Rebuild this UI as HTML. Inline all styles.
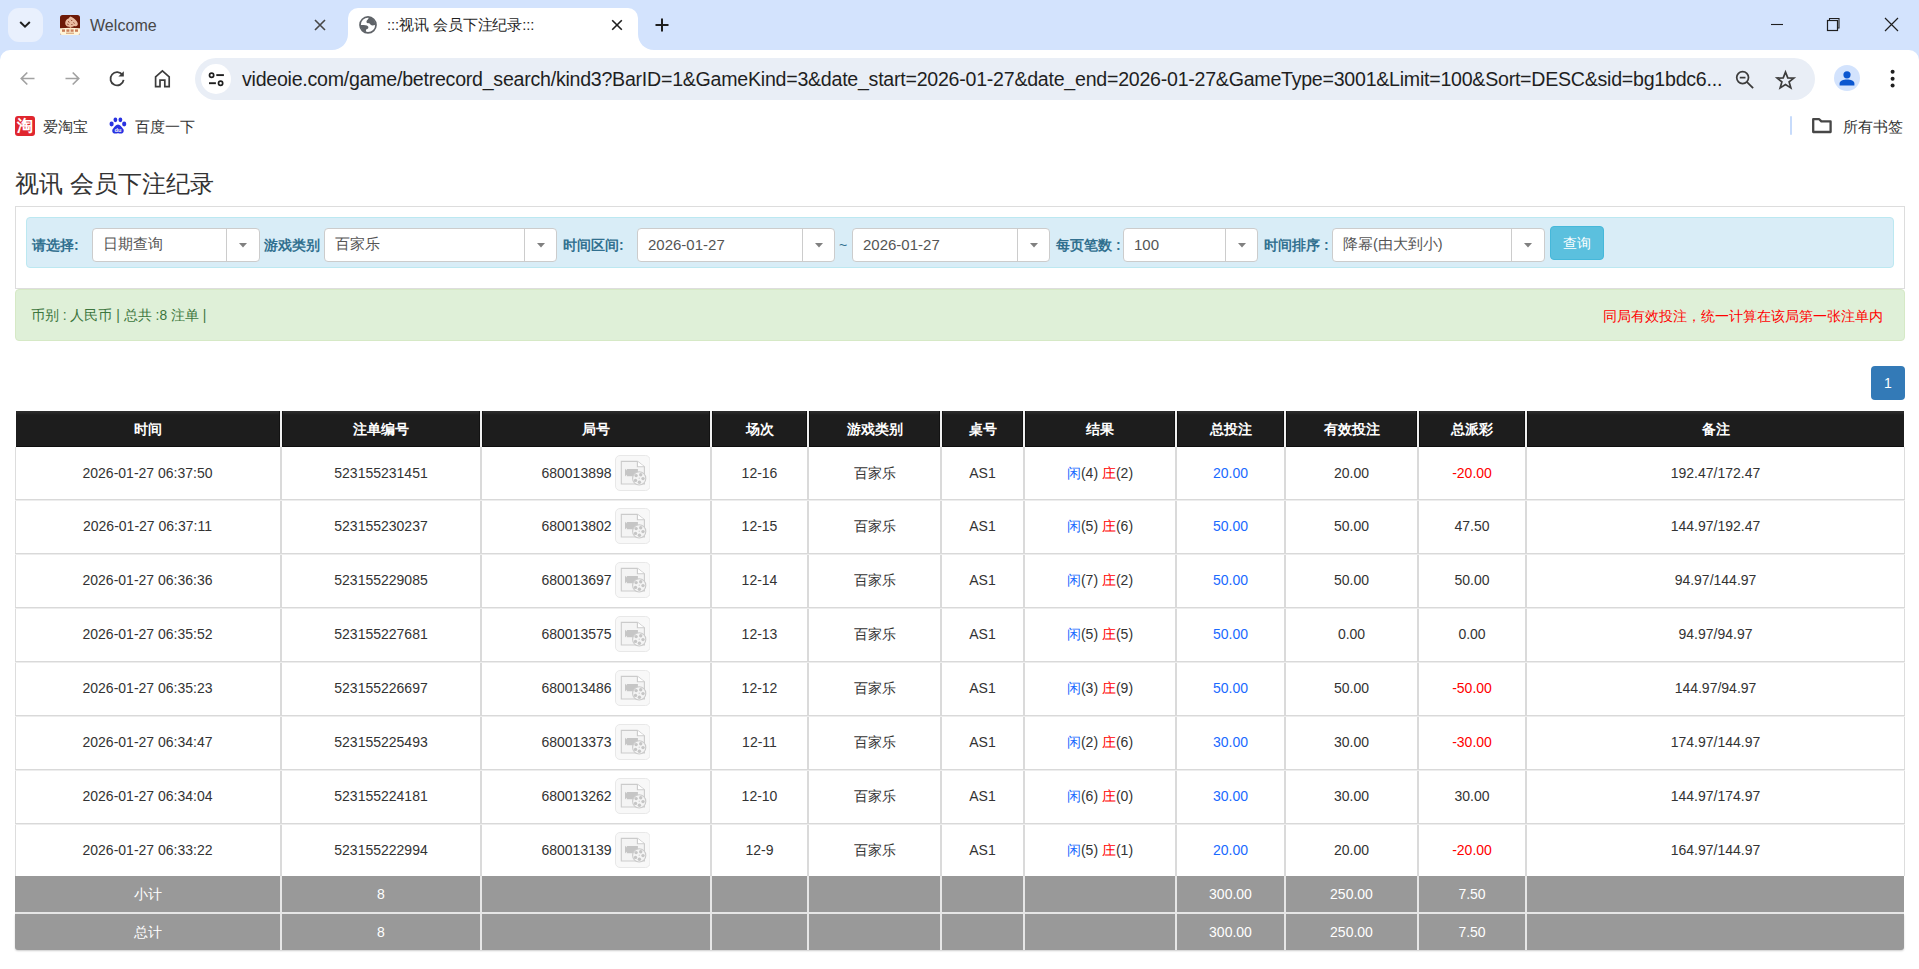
<!DOCTYPE html><html><head><meta charset="utf-8"><title>视讯 会员下注纪录</title><style>
*{box-sizing:border-box;margin:0;padding:0}
html,body{width:1919px;height:969px;overflow:hidden;background:#fff;font-family:"Liberation Sans",sans-serif;position:relative}
.a{position:absolute}
.t{position:absolute;white-space:nowrap;line-height:1}
.ic{position:absolute;overflow:visible}
</style></head><body>
<div class="a" style="left:0;top:0;width:1919px;height:62px;background:#d3e3fd"></div>
<div class="a" style="left:8px;top:8px;width:35px;height:34px;border-radius:11px;background:#e9f0fd"></div>
<svg class="ic" style="left:17px;top:16px" width="16" height="16" viewBox="0 0 16 16"><path d="M3.2 6 L8 10.6 L12.8 6" fill="none" stroke="#1f1f1f" stroke-width="2"/></svg>
<svg class="ic" style="left:60px;top:15px" width="20" height="20" viewBox="0 0 20 20"><rect x="0" y="0" width="20" height="20" rx="2.6" fill="#6d1a08"/><path d="M0 13.2 Q10 12.2 20 13.2 V17.4 Q20 20 17.4 20 H2.6 Q0 20 0 17.4Z" fill="#fff4d8"/><rect x="2" y="14.4" width="3" height="2.4" fill="#b5562f" opacity="0.75"/><rect x="6.4" y="14.4" width="3" height="2.4" fill="#b5562f" opacity="0.75"/><rect x="10.6" y="14.4" width="3" height="2.4" fill="#b5562f" opacity="0.75"/><rect x="15" y="14.4" width="3" height="2.4" fill="#b5562f" opacity="0.75"/><rect x="6" y="17.6" width="8" height="1.3" fill="#c98a5a" opacity="0.7"/><path d="M10.4 1.6 C13.6 3 17.4 5.6 17.8 8.8 C18 10.8 16.2 11.6 14.4 11 C12.6 12 10.8 12.2 9 11.8 C7 11.6 5 10.4 5.2 8 C5.4 5.6 6.8 3.8 8.6 3.6 C9.2 2.6 9.8 1.9 10.4 1.6Z" fill="#e9bba0"/><path d="M8 6.4 L9.4 7.4 M11 4.8 L12.2 6 M13.6 7.4 L14.4 8.6 M7.2 9 L8.6 9.6 M11.4 9 L12.4 10" stroke="#8a3a22" stroke-width="1"/><path d="M10.6 11.4 L11.6 13.2 L9.6 13.2Z" fill="#e7a97a"/></svg>
<div class="t" style="left:90px;top:18px;font-size:16px;color:#474747;letter-spacing:0.05px">Welcome</div>
<svg class="ic" style="left:314px;top:19px" width="12" height="12" viewBox="0 0 12 12"><path d="M1 1 L11 11 M11 1 L1 11" stroke="#474747" stroke-width="1.6"/></svg>
<div class="a" style="left:348px;top:8px;width:290px;height:42px;background:#fff;border-radius:10px 10px 0 0"></div>
<svg class="ic" style="left:332px;top:34px" width="16" height="16" viewBox="0 0 16 16"><path d="M16 0 L16 16 L0 16 C9 16 16 9 16 0Z" fill="#fff"/></svg>
<svg class="ic" style="left:638px;top:34px" width="16" height="16" viewBox="0 0 16 16"><path d="M0 0 L0 16 L16 16 C7 16 0 9 0 0Z" fill="#fff"/></svg>
<svg class="ic" style="left:356px;top:14px" width="24" height="22" viewBox="0 0 24 22"><circle cx="12" cy="10.9" r="8.0" fill="#fff" stroke="#5f6368" stroke-width="1.7"/><path d="M13 3 C12.6 4.6 12 5.4 11.3 5.9 C10.6 6.6 10.3 7.4 10.6 8.6 C11 9.4 12.6 9.2 13.6 9.5 C14.4 9.9 14.5 10.9 15.6 11.3 C16.8 11.6 18.2 11 19.2 10.9 C19.4 6.8 16.6 3.6 13 3Z" fill="#5f6368"/><path d="M4.4 11 C6.6 11 9 11.1 10.8 11.6 C12 12 12.6 12.8 12.3 14 C12 15 10.8 14.9 10.2 15.6 C9.8 16.2 9.9 17.2 10.3 18.2 C7 17.6 4.6 14.8 4.4 11Z" fill="#5f6368"/></svg>
<div class="t" style="left:387px;top:18px;font-size:14.8px;color:#1f1f1f;letter-spacing:-0.1px">:::视讯 会员下注纪录:::</div>
<svg class="ic" style="left:611px;top:19px" width="12" height="12" viewBox="0 0 12 12"><path d="M1.2 1.2 L10.8 10.8 M10.8 1.2 L1.2 10.8" stroke="#1f1f1f" stroke-width="1.6"/></svg>
<svg class="ic" style="left:655px;top:18px" width="14" height="14" viewBox="0 0 14 14"><path d="M7 0.5 V13.5 M0.5 7 H13.5" stroke="#1f1f1f" stroke-width="2"/></svg>
<svg class="ic" style="left:1770px;top:17px" width="14" height="14" viewBox="0 0 14 14"><path d="M1 7.5 H13" stroke="#1f1f1f" stroke-width="1.1"/></svg>
<svg class="ic" style="left:1826px;top:17px" width="14" height="14" viewBox="0 0 14 14"><rect x="1.5" y="3.5" width="10" height="10" fill="none" stroke="#1f1f1f" stroke-width="1.2"/><path d="M3.5 3.5 V1.5 H13 V11 H11.5" fill="none" stroke="#1f1f1f" stroke-width="1.1"/></svg>
<svg class="ic" style="left:1884px;top:17px" width="15" height="15" viewBox="0 0 15 15"><path d="M1 1 L14 14 M14 1 L1 14" stroke="#1f1f1f" stroke-width="1.2"/></svg>
<div class="a" style="left:0;top:50px;width:1919px;height:100px;background:#fff;border-radius:10px 10px 0 0"></div>
<svg class="ic" style="left:19px;top:70px" width="17" height="17" viewBox="0 0 17 17"><path d="M15.5 8.5 H2.5 M8.3 2.5 L2.3 8.5 L8.3 14.5" fill="none" stroke="#a2a2a2" stroke-width="1.7"/></svg>
<svg class="ic" style="left:64px;top:70px" width="17" height="17" viewBox="0 0 17 17"><path d="M1.5 8.5 H14.5 M8.7 2.5 L14.7 8.5 L8.7 14.5" fill="none" stroke="#a2a2a2" stroke-width="1.7"/></svg>
<svg class="ic" style="left:108px;top:69px" width="19" height="19" viewBox="0 0 19 19"><path d="M14.6 6.2 A6.6 6.6 0 1 0 15.6 10.8" fill="none" stroke="#3c3c3c" stroke-width="1.8"/><path d="M15.8 2.2 V7.6 H10.4 Z" fill="#3c3c3c"/></svg>
<svg class="ic" style="left:153px;top:69px" width="19" height="19" viewBox="0 0 19 19"><path d="M2.6 17.6 V7.8 L9.4 1.8 L16.2 7.8 V17.6 H11.8 V11.2 H7 V17.6 Z" fill="none" stroke="#3c3c3c" stroke-width="1.7" stroke-linejoin="miter"/></svg>
<div class="a" style="left:195px;top:58px;width:1620px;height:42px;border-radius:21px;background:#e9eef6"></div>
<div class="a" style="left:201px;top:64px;width:30px;height:30px;border-radius:15px;background:#fff"></div>
<svg class="ic" style="left:205px;top:70px" width="22" height="18" viewBox="0 0 22 18"><circle cx="6.6" cy="5.3" r="2.1" fill="none" stroke="#1f1f1f" stroke-width="1.7"/><path d="M11.3 5.1 H18.9" stroke="#1f1f1f" stroke-width="1.9"/><circle cx="15.6" cy="13.2" r="2.1" fill="none" stroke="#1f1f1f" stroke-width="1.7"/><path d="M4 13.2 H10.9" stroke="#1f1f1f" stroke-width="1.9"/></svg>
<div class="t" id="url" style="left:242px;top:70px;font-size:19.6px;letter-spacing:-0.25px;color:#1f1f1f">videoie.com/game/betrecord_search/kind3?BarID=1&amp;GameKind=3&amp;date_start=2026-01-27&amp;date_end=2026-01-27&amp;GameType=3001&amp;Limit=100&amp;Sort=DESC&amp;sid=bg1bdc6...</div>
<svg class="ic" style="left:1735px;top:70px" width="20" height="20" viewBox="0 0 21 21"><circle cx="8" cy="8" r="6.2" fill="none" stroke="#3c3c3c" stroke-width="1.8"/><path d="M5 8 H11" stroke="#3c3c3c" stroke-width="1.8"/><path d="M12.4 12.4 L19 19" stroke="#3c3c3c" stroke-width="1.9"/></svg>
<svg class="ic" style="left:1775px;top:69.5px" width="21" height="20" viewBox="0 0 22 21"><path d="M11 2.2 L13.4 8.2 L19.8 8.5 L14.8 12.5 L16.6 18.8 L11 15.2 L5.4 18.8 L7.2 12.5 L2.2 8.5 L8.6 8.2 Z" fill="none" stroke="#3c3c3c" stroke-width="1.8" stroke-linejoin="miter"/></svg>
<div class="a" style="left:1834px;top:65px;width:26px;height:26px;border-radius:13px;background:#d3e3fd"></div>
<svg class="ic" style="left:1834px;top:65px" width="26" height="26" viewBox="0 0 26 26"><circle cx="13" cy="9.8" r="3.6" fill="#0b57d0"/><path d="M5.6 20.4 V18.6 C5.6 16 9.4 14.6 13 14.6 C16.6 14.6 20.4 16 20.4 18.6 V20.4 Z" fill="#0b57d0"/></svg>
<svg class="ic" style="left:1888px;top:67px" width="10" height="24" viewBox="0 0 10 24"><circle cx="4.6" cy="4.8" r="2" fill="#1f1f1f"/><circle cx="4.6" cy="11.7" r="2" fill="#1f1f1f"/><circle cx="4.6" cy="18.5" r="2" fill="#1f1f1f"/></svg>
<div class="a" style="left:15px;top:116px;width:20px;height:20px;border-radius:3px;background:#e0262e"></div>
<div class="t" style="left:17px;top:118px;font-size:16px;color:#fff;font-weight:bold">淘</div>
<div class="t" style="left:43px;top:120px;font-size:14.6px;color:#333">爱淘宝</div>
<svg class="ic" style="left:109px;top:117px" width="18" height="18" viewBox="0 0 18 18"><ellipse cx="2.6" cy="7" rx="2.1" ry="2.4" fill="#2932e1"/><ellipse cx="6.4" cy="2.8" rx="1.9" ry="2.4" fill="#2932e1"/><ellipse cx="11.4" cy="2.8" rx="1.9" ry="2.4" fill="#2932e1"/><ellipse cx="15.2" cy="7" rx="2.1" ry="2.4" fill="#2932e1"/><path d="M9 7.6 C6.6 7.6 5.6 10.2 4 11.8 C2.6 13.2 3.2 16.6 6 16.6 C7.4 16.6 8 16.2 9 16.2 C10 16.2 10.6 16.6 12 16.6 C14.8 16.6 15.4 13.2 14 11.8 C12.4 10.2 11.4 7.6 9 7.6Z" fill="#2932e1"/><text x="9" y="15.4" font-size="5.6" font-family="Liberation Sans" fill="#fff" text-anchor="middle" font-weight="bold">du</text></svg>
<div class="t" style="left:135px;top:120px;font-size:14.6px;color:#333">百度一下</div>
<div class="a" style="left:1790px;top:116px;width:2px;height:19px;background:#c7dbfb;border-radius:1px"></div>
<svg class="ic" style="left:1811px;top:117px" width="22" height="17" viewBox="0 0 22 17"><path d="M2.2 2.2 H8.2 L10.4 4.4 H19.6 V15 H2.2 Z" fill="none" stroke="#474747" stroke-width="2.3" stroke-linejoin="round"/></svg>
<div class="t" style="left:1843px;top:120px;font-size:14.6px;color:#333">所有书签</div>
<div class="t" style="left:15px;top:172px;font-size:24px;color:#333">视讯 会员下注纪录</div>
<div class="a" style="left:15px;top:206px;width:1890px;height:83px;border:1px solid #ddd;border-bottom-color:#ddd"></div>
<div class="a" style="left:26px;top:217px;width:1868px;height:51px;border:1px solid #bce8f1;background:#d9edf7;border-radius:4px"></div>
<div class="t" style="left:32px;top:238px;font-size:14px;font-weight:bold;color:#31708f">请选择:</div>
<div class="a" style="left:92px;top:228px;width:168px;height:34px;border:1px solid #ccc;border-radius:4px;background:#fff"></div>
<div class="a" style="left:226px;top:229px;width:1px;height:32px;background:#ccc"></div>
<svg class="ic" style="left:239px;top:243px" width="8" height="5" viewBox="0 0 8 5"><path d="M0 0 H8 L4 4.5Z" fill="#808080"/></svg>
<div class="t" style="left:103px;top:237px;font-size:14.5px;color:#555">日期查询</div>
<div class="t" style="left:264px;top:238px;font-size:14px;font-weight:bold;color:#31708f">游戏类别</div>
<div class="a" style="left:324px;top:228px;width:233px;height:34px;border:1px solid #ccc;border-radius:4px;background:#fff"></div>
<div class="a" style="left:524px;top:229px;width:1px;height:32px;background:#ccc"></div>
<svg class="ic" style="left:537px;top:243px" width="8" height="5" viewBox="0 0 8 5"><path d="M0 0 H8 L4 4.5Z" fill="#808080"/></svg>
<div class="t" style="left:335px;top:237px;font-size:14.5px;color:#555">百家乐</div>
<div class="t" style="left:563px;top:238px;font-size:14px;font-weight:bold;color:#31708f">时间区间:</div>
<div class="a" style="left:637px;top:228px;width:198px;height:34px;border:1px solid #ccc;border-radius:4px;background:#fff"></div>
<div class="a" style="left:802px;top:229px;width:1px;height:32px;background:#ccc"></div>
<svg class="ic" style="left:815px;top:243px" width="8" height="5" viewBox="0 0 8 5"><path d="M0 0 H8 L4 4.5Z" fill="#808080"/></svg>
<div class="t" style="left:648px;top:237px;font-size:15px;color:#555">2026-01-27</div>
<div class="t" style="left:839px;top:238px;font-size:14px;color:#31708f">~</div>
<div class="a" style="left:852px;top:228px;width:198px;height:34px;border:1px solid #ccc;border-radius:4px;background:#fff"></div>
<div class="a" style="left:1017px;top:229px;width:1px;height:32px;background:#ccc"></div>
<svg class="ic" style="left:1030px;top:243px" width="8" height="5" viewBox="0 0 8 5"><path d="M0 0 H8 L4 4.5Z" fill="#808080"/></svg>
<div class="t" style="left:863px;top:237px;font-size:15px;color:#555">2026-01-27</div>
<div class="t" style="left:1056px;top:238px;font-size:14px;font-weight:bold;color:#31708f">每页笔数 :</div>
<div class="a" style="left:1123px;top:228px;width:135px;height:34px;border:1px solid #ccc;border-radius:4px;background:#fff"></div>
<div class="a" style="left:1225px;top:229px;width:1px;height:32px;background:#ccc"></div>
<svg class="ic" style="left:1238px;top:243px" width="8" height="5" viewBox="0 0 8 5"><path d="M0 0 H8 L4 4.5Z" fill="#808080"/></svg>
<div class="t" style="left:1134px;top:237px;font-size:15px;color:#555">100</div>
<div class="t" style="left:1264px;top:238px;font-size:14px;font-weight:bold;color:#31708f">时间排序 :</div>
<div class="a" style="left:1332px;top:228px;width:213px;height:34px;border:1px solid #ccc;border-radius:4px;background:#fff"></div>
<div class="a" style="left:1511px;top:229px;width:1px;height:32px;background:#ccc"></div>
<svg class="ic" style="left:1524px;top:243px" width="8" height="5" viewBox="0 0 8 5"><path d="M0 0 H8 L4 4.5Z" fill="#808080"/></svg>
<div class="t" style="left:1343px;top:237px;font-size:14.5px;color:#555">降幂(由大到小)</div>
<div class="a" style="left:1550px;top:226px;width:54px;height:34px;border-radius:4px;background:#5bc0de;border:1px solid #46b8da"></div>
<div class="t" style="left:1563px;top:236px;font-size:14px;color:#fff">查询</div>
<div class="a" style="left:15px;top:289px;width:1890px;height:52px;border:1px solid #d6e9c6;background:#dff0d8;border-radius:4px"></div>
<div class="t" style="left:31px;top:309px;font-size:13.8px;color:#3c763d">币别 : 人民币 | 总共 :8 注单 |</div>
<div class="t" style="left:1603px;top:309px;font-size:14px;color:#f00">同局有效投注，统一计算在该局第一张注单内</div>
<div class="a" style="left:1871px;top:366px;width:34px;height:34px;border-radius:4px;background:#337ab7"></div>
<div class="t" style="left:1884px;top:376px;font-size:14px;color:#fff">1</div>
<div class="a" style="left:16px;top:411px;width:1888px;height:36px;background:linear-gradient(#2a2a2a 0px,#2c2c2c 1px,#242424 2.5px,#1d1d1d 4px,#1d1d1d 35px,#0e0e0e 35px)"></div>
<div class="a" style="left:279px;top:411px;width:4px;height:36px;background:#121212"></div>
<div class="a" style="left:280px;top:411px;width:2px;height:36px;background:#f0f0f0"></div>
<div class="a" style="left:479px;top:411px;width:4px;height:36px;background:#121212"></div>
<div class="a" style="left:480px;top:411px;width:2px;height:36px;background:#f0f0f0"></div>
<div class="a" style="left:709px;top:411px;width:4px;height:36px;background:#121212"></div>
<div class="a" style="left:710px;top:411px;width:2px;height:36px;background:#f0f0f0"></div>
<div class="a" style="left:806px;top:411px;width:4px;height:36px;background:#121212"></div>
<div class="a" style="left:807px;top:411px;width:2px;height:36px;background:#f0f0f0"></div>
<div class="a" style="left:939px;top:411px;width:4px;height:36px;background:#121212"></div>
<div class="a" style="left:940px;top:411px;width:2px;height:36px;background:#f0f0f0"></div>
<div class="a" style="left:1022px;top:411px;width:4px;height:36px;background:#121212"></div>
<div class="a" style="left:1023px;top:411px;width:2px;height:36px;background:#f0f0f0"></div>
<div class="a" style="left:1174px;top:411px;width:4px;height:36px;background:#121212"></div>
<div class="a" style="left:1175px;top:411px;width:2px;height:36px;background:#f0f0f0"></div>
<div class="a" style="left:1283px;top:411px;width:4px;height:36px;background:#121212"></div>
<div class="a" style="left:1284px;top:411px;width:2px;height:36px;background:#f0f0f0"></div>
<div class="a" style="left:1416px;top:411px;width:4px;height:36px;background:#121212"></div>
<div class="a" style="left:1417px;top:411px;width:2px;height:36px;background:#f0f0f0"></div>
<div class="a" style="left:1524px;top:411px;width:4px;height:36px;background:#121212"></div>
<div class="a" style="left:1525px;top:411px;width:2px;height:36px;background:#f0f0f0"></div>
<div class="t" style="left:15px;top:422px;width:265px;text-align:center;font-size:14px;font-weight:bold;color:#fff">时间</div>
<div class="t" style="left:282px;top:422px;width:198px;text-align:center;font-size:14px;font-weight:bold;color:#fff">注单编号</div>
<div class="t" style="left:482px;top:422px;width:228px;text-align:center;font-size:14px;font-weight:bold;color:#fff">局号</div>
<div class="t" style="left:712px;top:422px;width:95px;text-align:center;font-size:14px;font-weight:bold;color:#fff">场次</div>
<div class="t" style="left:809px;top:422px;width:131px;text-align:center;font-size:14px;font-weight:bold;color:#fff">游戏类别</div>
<div class="t" style="left:942px;top:422px;width:81px;text-align:center;font-size:14px;font-weight:bold;color:#fff">桌号</div>
<div class="t" style="left:1025px;top:422px;width:150px;text-align:center;font-size:14px;font-weight:bold;color:#fff">结果</div>
<div class="t" style="left:1177px;top:422px;width:107px;text-align:center;font-size:14px;font-weight:bold;color:#fff">总投注</div>
<div class="t" style="left:1286px;top:422px;width:131px;text-align:center;font-size:14px;font-weight:bold;color:#fff">有效投注</div>
<div class="t" style="left:1419px;top:422px;width:106px;text-align:center;font-size:14px;font-weight:bold;color:#fff">总派彩</div>
<div class="t" style="left:1527px;top:422px;width:377px;text-align:center;font-size:14px;font-weight:bold;color:#fff">备注</div>
<div class="a" style="left:15px;top:447px;width:1890px;height:429px;border-left:1px solid #ddd;border-right:1px solid #ddd"></div>
<div class="a" style="left:280px;top:447px;width:2px;height:429px;background:#dadada"></div>
<div class="a" style="left:480px;top:447px;width:2px;height:429px;background:#dadada"></div>
<div class="a" style="left:710px;top:447px;width:2px;height:429px;background:#dadada"></div>
<div class="a" style="left:807px;top:447px;width:2px;height:429px;background:#dadada"></div>
<div class="a" style="left:940px;top:447px;width:2px;height:429px;background:#dadada"></div>
<div class="a" style="left:1023px;top:447px;width:2px;height:429px;background:#dadada"></div>
<div class="a" style="left:1175px;top:447px;width:2px;height:429px;background:#dadada"></div>
<div class="a" style="left:1284px;top:447px;width:2px;height:429px;background:#dadada"></div>
<div class="a" style="left:1417px;top:447px;width:2px;height:429px;background:#dadada"></div>
<div class="a" style="left:1525px;top:447px;width:2px;height:429px;background:#dadada"></div>
<div class="a" style="left:15px;top:499px;width:1890px;height:1px;background:#d9d9d9"></div>
<div class="a" style="left:15px;top:500px;width:1890px;height:1px;background:#ededed"></div>
<div class="a" style="left:15px;top:553px;width:1890px;height:1px;background:#d9d9d9"></div>
<div class="a" style="left:15px;top:554px;width:1890px;height:1px;background:#ededed"></div>
<div class="a" style="left:15px;top:607px;width:1890px;height:1px;background:#d9d9d9"></div>
<div class="a" style="left:15px;top:608px;width:1890px;height:1px;background:#ededed"></div>
<div class="a" style="left:15px;top:661px;width:1890px;height:1px;background:#d9d9d9"></div>
<div class="a" style="left:15px;top:662px;width:1890px;height:1px;background:#ededed"></div>
<div class="a" style="left:15px;top:715px;width:1890px;height:1px;background:#d9d9d9"></div>
<div class="a" style="left:15px;top:716px;width:1890px;height:1px;background:#ededed"></div>
<div class="a" style="left:15px;top:769px;width:1890px;height:1px;background:#d9d9d9"></div>
<div class="a" style="left:15px;top:770px;width:1890px;height:1px;background:#ededed"></div>
<div class="a" style="left:15px;top:823px;width:1890px;height:1px;background:#d9d9d9"></div>
<div class="a" style="left:15px;top:824px;width:1890px;height:1px;background:#ededed"></div>
<div class="t" style="left:15px;top:466px;width:265px;text-align:center;font-size:14px;color:#333;">2026-01-27 06:37:50</div>
<div class="t" style="left:282px;top:466px;width:198px;text-align:center;font-size:14px;color:#333;">523155231451</div>
<div class="t" style="left:482px;top:466px;width:228px;text-align:center;font-size:14px;color:#333">680013898<span style="display:inline-block;width:39px"></span></div>
<div class="a" style="left:615px;top:455px;width:36px;height:36px"><svg width="35" height="36" viewBox="0 0 35 36" style="position:absolute;left:0;top:0"><rect x="0.5" y="0.5" width="34.5" height="35" rx="4.5" fill="#f8f8f8" stroke="#e8e8e8"/><path d="M6.3 6.4 H22.4 L29.4 11.8 V29 H6.3 Z" fill="#f4f4f4" stroke="#cbcbcb" stroke-width="1.1"/><path d="M22.4 6.4 V11.8 H29.4" fill="#fff" stroke="#cbcbcb" stroke-width="1.1"/><path d="M10 13.8 L11.8 15.6 V19.6 L10 21.4 Z M11.8 14 H22.9 V21.3 H11.8Z" fill="#c6c6c6"/><circle cx="24.2" cy="23.4" r="6.6" fill="#f4f4f4" stroke="#cbcbcb" stroke-width="1.1"/><circle cx="21.1" cy="20.6" r="1.7" fill="#c6c6c6"/><circle cx="25.7" cy="19.8" r="1.7" fill="#c6c6c6"/><circle cx="28" cy="23.6" r="1.7" fill="#c6c6c6"/><circle cx="24.4" cy="27.2" r="1.7" fill="#c6c6c6"/><circle cx="20.5" cy="25.4" r="1.7" fill="#c6c6c6"/><circle cx="24.2" cy="23.2" r="0.6" fill="#c6c6c6"/></svg></div>
<div class="t" style="left:712px;top:466px;width:95px;text-align:center;font-size:14px;color:#333;">12-16</div>
<div class="t" style="left:809px;top:466px;width:131px;text-align:center;font-size:14px;color:#333;">百家乐</div>
<div class="t" style="left:942px;top:466px;width:81px;text-align:center;font-size:14px;color:#333;">AS1</div>
<div class="t" style="left:1025px;top:466px;width:150px;text-align:center;font-size:14px;color:#333;"><span style="color:#1a6aff">闲</span>(4) <span style="color:#f00">庄</span>(2)</div>
<div class="t" style="left:1177px;top:466px;width:107px;text-align:center;font-size:14px;color:#1a6aff;">20.00</div>
<div class="t" style="left:1286px;top:466px;width:131px;text-align:center;font-size:14px;color:#333;">20.00</div>
<div class="t" style="left:1419px;top:466px;width:106px;text-align:center;font-size:14px;color:#f00;">-20.00</div>
<div class="t" style="left:1527px;top:466px;width:377px;text-align:center;font-size:14px;color:#333;">192.47/172.47</div>
<div class="t" style="left:15px;top:519px;width:265px;text-align:center;font-size:14px;color:#333;">2026-01-27 06:37:11</div>
<div class="t" style="left:282px;top:519px;width:198px;text-align:center;font-size:14px;color:#333;">523155230237</div>
<div class="t" style="left:482px;top:519px;width:228px;text-align:center;font-size:14px;color:#333">680013802<span style="display:inline-block;width:39px"></span></div>
<div class="a" style="left:615px;top:508px;width:36px;height:36px"><svg width="35" height="36" viewBox="0 0 35 36" style="position:absolute;left:0;top:0"><rect x="0.5" y="0.5" width="34.5" height="35" rx="4.5" fill="#f8f8f8" stroke="#e8e8e8"/><path d="M6.3 6.4 H22.4 L29.4 11.8 V29 H6.3 Z" fill="#f4f4f4" stroke="#cbcbcb" stroke-width="1.1"/><path d="M22.4 6.4 V11.8 H29.4" fill="#fff" stroke="#cbcbcb" stroke-width="1.1"/><path d="M10 13.8 L11.8 15.6 V19.6 L10 21.4 Z M11.8 14 H22.9 V21.3 H11.8Z" fill="#c6c6c6"/><circle cx="24.2" cy="23.4" r="6.6" fill="#f4f4f4" stroke="#cbcbcb" stroke-width="1.1"/><circle cx="21.1" cy="20.6" r="1.7" fill="#c6c6c6"/><circle cx="25.7" cy="19.8" r="1.7" fill="#c6c6c6"/><circle cx="28" cy="23.6" r="1.7" fill="#c6c6c6"/><circle cx="24.4" cy="27.2" r="1.7" fill="#c6c6c6"/><circle cx="20.5" cy="25.4" r="1.7" fill="#c6c6c6"/><circle cx="24.2" cy="23.2" r="0.6" fill="#c6c6c6"/></svg></div>
<div class="t" style="left:712px;top:519px;width:95px;text-align:center;font-size:14px;color:#333;">12-15</div>
<div class="t" style="left:809px;top:519px;width:131px;text-align:center;font-size:14px;color:#333;">百家乐</div>
<div class="t" style="left:942px;top:519px;width:81px;text-align:center;font-size:14px;color:#333;">AS1</div>
<div class="t" style="left:1025px;top:519px;width:150px;text-align:center;font-size:14px;color:#333;"><span style="color:#1a6aff">闲</span>(5) <span style="color:#f00">庄</span>(6)</div>
<div class="t" style="left:1177px;top:519px;width:107px;text-align:center;font-size:14px;color:#1a6aff;">50.00</div>
<div class="t" style="left:1286px;top:519px;width:131px;text-align:center;font-size:14px;color:#333;">50.00</div>
<div class="t" style="left:1419px;top:519px;width:106px;text-align:center;font-size:14px;color:#333;">47.50</div>
<div class="t" style="left:1527px;top:519px;width:377px;text-align:center;font-size:14px;color:#333;">144.97/192.47</div>
<div class="t" style="left:15px;top:573px;width:265px;text-align:center;font-size:14px;color:#333;">2026-01-27 06:36:36</div>
<div class="t" style="left:282px;top:573px;width:198px;text-align:center;font-size:14px;color:#333;">523155229085</div>
<div class="t" style="left:482px;top:573px;width:228px;text-align:center;font-size:14px;color:#333">680013697<span style="display:inline-block;width:39px"></span></div>
<div class="a" style="left:615px;top:562px;width:36px;height:36px"><svg width="35" height="36" viewBox="0 0 35 36" style="position:absolute;left:0;top:0"><rect x="0.5" y="0.5" width="34.5" height="35" rx="4.5" fill="#f8f8f8" stroke="#e8e8e8"/><path d="M6.3 6.4 H22.4 L29.4 11.8 V29 H6.3 Z" fill="#f4f4f4" stroke="#cbcbcb" stroke-width="1.1"/><path d="M22.4 6.4 V11.8 H29.4" fill="#fff" stroke="#cbcbcb" stroke-width="1.1"/><path d="M10 13.8 L11.8 15.6 V19.6 L10 21.4 Z M11.8 14 H22.9 V21.3 H11.8Z" fill="#c6c6c6"/><circle cx="24.2" cy="23.4" r="6.6" fill="#f4f4f4" stroke="#cbcbcb" stroke-width="1.1"/><circle cx="21.1" cy="20.6" r="1.7" fill="#c6c6c6"/><circle cx="25.7" cy="19.8" r="1.7" fill="#c6c6c6"/><circle cx="28" cy="23.6" r="1.7" fill="#c6c6c6"/><circle cx="24.4" cy="27.2" r="1.7" fill="#c6c6c6"/><circle cx="20.5" cy="25.4" r="1.7" fill="#c6c6c6"/><circle cx="24.2" cy="23.2" r="0.6" fill="#c6c6c6"/></svg></div>
<div class="t" style="left:712px;top:573px;width:95px;text-align:center;font-size:14px;color:#333;">12-14</div>
<div class="t" style="left:809px;top:573px;width:131px;text-align:center;font-size:14px;color:#333;">百家乐</div>
<div class="t" style="left:942px;top:573px;width:81px;text-align:center;font-size:14px;color:#333;">AS1</div>
<div class="t" style="left:1025px;top:573px;width:150px;text-align:center;font-size:14px;color:#333;"><span style="color:#1a6aff">闲</span>(7) <span style="color:#f00">庄</span>(2)</div>
<div class="t" style="left:1177px;top:573px;width:107px;text-align:center;font-size:14px;color:#1a6aff;">50.00</div>
<div class="t" style="left:1286px;top:573px;width:131px;text-align:center;font-size:14px;color:#333;">50.00</div>
<div class="t" style="left:1419px;top:573px;width:106px;text-align:center;font-size:14px;color:#333;">50.00</div>
<div class="t" style="left:1527px;top:573px;width:377px;text-align:center;font-size:14px;color:#333;">94.97/144.97</div>
<div class="t" style="left:15px;top:627px;width:265px;text-align:center;font-size:14px;color:#333;">2026-01-27 06:35:52</div>
<div class="t" style="left:282px;top:627px;width:198px;text-align:center;font-size:14px;color:#333;">523155227681</div>
<div class="t" style="left:482px;top:627px;width:228px;text-align:center;font-size:14px;color:#333">680013575<span style="display:inline-block;width:39px"></span></div>
<div class="a" style="left:615px;top:616px;width:36px;height:36px"><svg width="35" height="36" viewBox="0 0 35 36" style="position:absolute;left:0;top:0"><rect x="0.5" y="0.5" width="34.5" height="35" rx="4.5" fill="#f8f8f8" stroke="#e8e8e8"/><path d="M6.3 6.4 H22.4 L29.4 11.8 V29 H6.3 Z" fill="#f4f4f4" stroke="#cbcbcb" stroke-width="1.1"/><path d="M22.4 6.4 V11.8 H29.4" fill="#fff" stroke="#cbcbcb" stroke-width="1.1"/><path d="M10 13.8 L11.8 15.6 V19.6 L10 21.4 Z M11.8 14 H22.9 V21.3 H11.8Z" fill="#c6c6c6"/><circle cx="24.2" cy="23.4" r="6.6" fill="#f4f4f4" stroke="#cbcbcb" stroke-width="1.1"/><circle cx="21.1" cy="20.6" r="1.7" fill="#c6c6c6"/><circle cx="25.7" cy="19.8" r="1.7" fill="#c6c6c6"/><circle cx="28" cy="23.6" r="1.7" fill="#c6c6c6"/><circle cx="24.4" cy="27.2" r="1.7" fill="#c6c6c6"/><circle cx="20.5" cy="25.4" r="1.7" fill="#c6c6c6"/><circle cx="24.2" cy="23.2" r="0.6" fill="#c6c6c6"/></svg></div>
<div class="t" style="left:712px;top:627px;width:95px;text-align:center;font-size:14px;color:#333;">12-13</div>
<div class="t" style="left:809px;top:627px;width:131px;text-align:center;font-size:14px;color:#333;">百家乐</div>
<div class="t" style="left:942px;top:627px;width:81px;text-align:center;font-size:14px;color:#333;">AS1</div>
<div class="t" style="left:1025px;top:627px;width:150px;text-align:center;font-size:14px;color:#333;"><span style="color:#1a6aff">闲</span>(5) <span style="color:#f00">庄</span>(5)</div>
<div class="t" style="left:1177px;top:627px;width:107px;text-align:center;font-size:14px;color:#1a6aff;">50.00</div>
<div class="t" style="left:1286px;top:627px;width:131px;text-align:center;font-size:14px;color:#333;">0.00</div>
<div class="t" style="left:1419px;top:627px;width:106px;text-align:center;font-size:14px;color:#333;">0.00</div>
<div class="t" style="left:1527px;top:627px;width:377px;text-align:center;font-size:14px;color:#333;">94.97/94.97</div>
<div class="t" style="left:15px;top:681px;width:265px;text-align:center;font-size:14px;color:#333;">2026-01-27 06:35:23</div>
<div class="t" style="left:282px;top:681px;width:198px;text-align:center;font-size:14px;color:#333;">523155226697</div>
<div class="t" style="left:482px;top:681px;width:228px;text-align:center;font-size:14px;color:#333">680013486<span style="display:inline-block;width:39px"></span></div>
<div class="a" style="left:615px;top:670px;width:36px;height:36px"><svg width="35" height="36" viewBox="0 0 35 36" style="position:absolute;left:0;top:0"><rect x="0.5" y="0.5" width="34.5" height="35" rx="4.5" fill="#f8f8f8" stroke="#e8e8e8"/><path d="M6.3 6.4 H22.4 L29.4 11.8 V29 H6.3 Z" fill="#f4f4f4" stroke="#cbcbcb" stroke-width="1.1"/><path d="M22.4 6.4 V11.8 H29.4" fill="#fff" stroke="#cbcbcb" stroke-width="1.1"/><path d="M10 13.8 L11.8 15.6 V19.6 L10 21.4 Z M11.8 14 H22.9 V21.3 H11.8Z" fill="#c6c6c6"/><circle cx="24.2" cy="23.4" r="6.6" fill="#f4f4f4" stroke="#cbcbcb" stroke-width="1.1"/><circle cx="21.1" cy="20.6" r="1.7" fill="#c6c6c6"/><circle cx="25.7" cy="19.8" r="1.7" fill="#c6c6c6"/><circle cx="28" cy="23.6" r="1.7" fill="#c6c6c6"/><circle cx="24.4" cy="27.2" r="1.7" fill="#c6c6c6"/><circle cx="20.5" cy="25.4" r="1.7" fill="#c6c6c6"/><circle cx="24.2" cy="23.2" r="0.6" fill="#c6c6c6"/></svg></div>
<div class="t" style="left:712px;top:681px;width:95px;text-align:center;font-size:14px;color:#333;">12-12</div>
<div class="t" style="left:809px;top:681px;width:131px;text-align:center;font-size:14px;color:#333;">百家乐</div>
<div class="t" style="left:942px;top:681px;width:81px;text-align:center;font-size:14px;color:#333;">AS1</div>
<div class="t" style="left:1025px;top:681px;width:150px;text-align:center;font-size:14px;color:#333;"><span style="color:#1a6aff">闲</span>(3) <span style="color:#f00">庄</span>(9)</div>
<div class="t" style="left:1177px;top:681px;width:107px;text-align:center;font-size:14px;color:#1a6aff;">50.00</div>
<div class="t" style="left:1286px;top:681px;width:131px;text-align:center;font-size:14px;color:#333;">50.00</div>
<div class="t" style="left:1419px;top:681px;width:106px;text-align:center;font-size:14px;color:#f00;">-50.00</div>
<div class="t" style="left:1527px;top:681px;width:377px;text-align:center;font-size:14px;color:#333;">144.97/94.97</div>
<div class="t" style="left:15px;top:735px;width:265px;text-align:center;font-size:14px;color:#333;">2026-01-27 06:34:47</div>
<div class="t" style="left:282px;top:735px;width:198px;text-align:center;font-size:14px;color:#333;">523155225493</div>
<div class="t" style="left:482px;top:735px;width:228px;text-align:center;font-size:14px;color:#333">680013373<span style="display:inline-block;width:39px"></span></div>
<div class="a" style="left:615px;top:724px;width:36px;height:36px"><svg width="35" height="36" viewBox="0 0 35 36" style="position:absolute;left:0;top:0"><rect x="0.5" y="0.5" width="34.5" height="35" rx="4.5" fill="#f8f8f8" stroke="#e8e8e8"/><path d="M6.3 6.4 H22.4 L29.4 11.8 V29 H6.3 Z" fill="#f4f4f4" stroke="#cbcbcb" stroke-width="1.1"/><path d="M22.4 6.4 V11.8 H29.4" fill="#fff" stroke="#cbcbcb" stroke-width="1.1"/><path d="M10 13.8 L11.8 15.6 V19.6 L10 21.4 Z M11.8 14 H22.9 V21.3 H11.8Z" fill="#c6c6c6"/><circle cx="24.2" cy="23.4" r="6.6" fill="#f4f4f4" stroke="#cbcbcb" stroke-width="1.1"/><circle cx="21.1" cy="20.6" r="1.7" fill="#c6c6c6"/><circle cx="25.7" cy="19.8" r="1.7" fill="#c6c6c6"/><circle cx="28" cy="23.6" r="1.7" fill="#c6c6c6"/><circle cx="24.4" cy="27.2" r="1.7" fill="#c6c6c6"/><circle cx="20.5" cy="25.4" r="1.7" fill="#c6c6c6"/><circle cx="24.2" cy="23.2" r="0.6" fill="#c6c6c6"/></svg></div>
<div class="t" style="left:712px;top:735px;width:95px;text-align:center;font-size:14px;color:#333;">12-11</div>
<div class="t" style="left:809px;top:735px;width:131px;text-align:center;font-size:14px;color:#333;">百家乐</div>
<div class="t" style="left:942px;top:735px;width:81px;text-align:center;font-size:14px;color:#333;">AS1</div>
<div class="t" style="left:1025px;top:735px;width:150px;text-align:center;font-size:14px;color:#333;"><span style="color:#1a6aff">闲</span>(2) <span style="color:#f00">庄</span>(6)</div>
<div class="t" style="left:1177px;top:735px;width:107px;text-align:center;font-size:14px;color:#1a6aff;">30.00</div>
<div class="t" style="left:1286px;top:735px;width:131px;text-align:center;font-size:14px;color:#333;">30.00</div>
<div class="t" style="left:1419px;top:735px;width:106px;text-align:center;font-size:14px;color:#f00;">-30.00</div>
<div class="t" style="left:1527px;top:735px;width:377px;text-align:center;font-size:14px;color:#333;">174.97/144.97</div>
<div class="t" style="left:15px;top:789px;width:265px;text-align:center;font-size:14px;color:#333;">2026-01-27 06:34:04</div>
<div class="t" style="left:282px;top:789px;width:198px;text-align:center;font-size:14px;color:#333;">523155224181</div>
<div class="t" style="left:482px;top:789px;width:228px;text-align:center;font-size:14px;color:#333">680013262<span style="display:inline-block;width:39px"></span></div>
<div class="a" style="left:615px;top:778px;width:36px;height:36px"><svg width="35" height="36" viewBox="0 0 35 36" style="position:absolute;left:0;top:0"><rect x="0.5" y="0.5" width="34.5" height="35" rx="4.5" fill="#f8f8f8" stroke="#e8e8e8"/><path d="M6.3 6.4 H22.4 L29.4 11.8 V29 H6.3 Z" fill="#f4f4f4" stroke="#cbcbcb" stroke-width="1.1"/><path d="M22.4 6.4 V11.8 H29.4" fill="#fff" stroke="#cbcbcb" stroke-width="1.1"/><path d="M10 13.8 L11.8 15.6 V19.6 L10 21.4 Z M11.8 14 H22.9 V21.3 H11.8Z" fill="#c6c6c6"/><circle cx="24.2" cy="23.4" r="6.6" fill="#f4f4f4" stroke="#cbcbcb" stroke-width="1.1"/><circle cx="21.1" cy="20.6" r="1.7" fill="#c6c6c6"/><circle cx="25.7" cy="19.8" r="1.7" fill="#c6c6c6"/><circle cx="28" cy="23.6" r="1.7" fill="#c6c6c6"/><circle cx="24.4" cy="27.2" r="1.7" fill="#c6c6c6"/><circle cx="20.5" cy="25.4" r="1.7" fill="#c6c6c6"/><circle cx="24.2" cy="23.2" r="0.6" fill="#c6c6c6"/></svg></div>
<div class="t" style="left:712px;top:789px;width:95px;text-align:center;font-size:14px;color:#333;">12-10</div>
<div class="t" style="left:809px;top:789px;width:131px;text-align:center;font-size:14px;color:#333;">百家乐</div>
<div class="t" style="left:942px;top:789px;width:81px;text-align:center;font-size:14px;color:#333;">AS1</div>
<div class="t" style="left:1025px;top:789px;width:150px;text-align:center;font-size:14px;color:#333;"><span style="color:#1a6aff">闲</span>(6) <span style="color:#f00">庄</span>(0)</div>
<div class="t" style="left:1177px;top:789px;width:107px;text-align:center;font-size:14px;color:#1a6aff;">30.00</div>
<div class="t" style="left:1286px;top:789px;width:131px;text-align:center;font-size:14px;color:#333;">30.00</div>
<div class="t" style="left:1419px;top:789px;width:106px;text-align:center;font-size:14px;color:#333;">30.00</div>
<div class="t" style="left:1527px;top:789px;width:377px;text-align:center;font-size:14px;color:#333;">144.97/174.97</div>
<div class="t" style="left:15px;top:843px;width:265px;text-align:center;font-size:14px;color:#333;">2026-01-27 06:33:22</div>
<div class="t" style="left:282px;top:843px;width:198px;text-align:center;font-size:14px;color:#333;">523155222994</div>
<div class="t" style="left:482px;top:843px;width:228px;text-align:center;font-size:14px;color:#333">680013139<span style="display:inline-block;width:39px"></span></div>
<div class="a" style="left:615px;top:832px;width:36px;height:36px"><svg width="35" height="36" viewBox="0 0 35 36" style="position:absolute;left:0;top:0"><rect x="0.5" y="0.5" width="34.5" height="35" rx="4.5" fill="#f8f8f8" stroke="#e8e8e8"/><path d="M6.3 6.4 H22.4 L29.4 11.8 V29 H6.3 Z" fill="#f4f4f4" stroke="#cbcbcb" stroke-width="1.1"/><path d="M22.4 6.4 V11.8 H29.4" fill="#fff" stroke="#cbcbcb" stroke-width="1.1"/><path d="M10 13.8 L11.8 15.6 V19.6 L10 21.4 Z M11.8 14 H22.9 V21.3 H11.8Z" fill="#c6c6c6"/><circle cx="24.2" cy="23.4" r="6.6" fill="#f4f4f4" stroke="#cbcbcb" stroke-width="1.1"/><circle cx="21.1" cy="20.6" r="1.7" fill="#c6c6c6"/><circle cx="25.7" cy="19.8" r="1.7" fill="#c6c6c6"/><circle cx="28" cy="23.6" r="1.7" fill="#c6c6c6"/><circle cx="24.4" cy="27.2" r="1.7" fill="#c6c6c6"/><circle cx="20.5" cy="25.4" r="1.7" fill="#c6c6c6"/><circle cx="24.2" cy="23.2" r="0.6" fill="#c6c6c6"/></svg></div>
<div class="t" style="left:712px;top:843px;width:95px;text-align:center;font-size:14px;color:#333;">12-9</div>
<div class="t" style="left:809px;top:843px;width:131px;text-align:center;font-size:14px;color:#333;">百家乐</div>
<div class="t" style="left:942px;top:843px;width:81px;text-align:center;font-size:14px;color:#333;">AS1</div>
<div class="t" style="left:1025px;top:843px;width:150px;text-align:center;font-size:14px;color:#333;"><span style="color:#1a6aff">闲</span>(5) <span style="color:#f00">庄</span>(1)</div>
<div class="t" style="left:1177px;top:843px;width:107px;text-align:center;font-size:14px;color:#1a6aff;">20.00</div>
<div class="t" style="left:1286px;top:843px;width:131px;text-align:center;font-size:14px;color:#333;">20.00</div>
<div class="t" style="left:1419px;top:843px;width:106px;text-align:center;font-size:14px;color:#f00;">-20.00</div>
<div class="t" style="left:1527px;top:843px;width:377px;text-align:center;font-size:14px;color:#333;">164.97/144.97</div>
<div class="a" style="left:15px;top:876px;width:1889px;height:36px;background:#999;"></div>
<div class="a" style="left:280px;top:876px;width:2px;height:36px;background:#e6e6e6"></div>
<div class="a" style="left:480px;top:876px;width:2px;height:36px;background:#e6e6e6"></div>
<div class="a" style="left:710px;top:876px;width:2px;height:36px;background:#e6e6e6"></div>
<div class="a" style="left:807px;top:876px;width:2px;height:36px;background:#e6e6e6"></div>
<div class="a" style="left:940px;top:876px;width:2px;height:36px;background:#e6e6e6"></div>
<div class="a" style="left:1023px;top:876px;width:2px;height:36px;background:#e6e6e6"></div>
<div class="a" style="left:1175px;top:876px;width:2px;height:36px;background:#e6e6e6"></div>
<div class="a" style="left:1284px;top:876px;width:2px;height:36px;background:#e6e6e6"></div>
<div class="a" style="left:1417px;top:876px;width:2px;height:36px;background:#e6e6e6"></div>
<div class="a" style="left:1525px;top:876px;width:2px;height:36px;background:#e6e6e6"></div>
<div class="t" style="left:15px;top:887px;width:265px;text-align:center;font-size:14px;color:#fff;">小计</div>
<div class="t" style="left:282px;top:887px;width:198px;text-align:center;font-size:14px;color:#fff;">8</div>
<div class="t" style="left:1177px;top:887px;width:107px;text-align:center;font-size:14px;color:#fff;">300.00</div>
<div class="t" style="left:1286px;top:887px;width:131px;text-align:center;font-size:14px;color:#fff;">250.00</div>
<div class="t" style="left:1419px;top:887px;width:106px;text-align:center;font-size:14px;color:#fff;">7.50</div>
<div class="a" style="left:15px;top:914px;width:1889px;height:36px;background:#999;border-radius:0 0 3px 3px;box-shadow:0 1px 2px rgba(0,0,0,0.2)"></div>
<div class="a" style="left:280px;top:914px;width:2px;height:36px;background:#e6e6e6"></div>
<div class="a" style="left:480px;top:914px;width:2px;height:36px;background:#e6e6e6"></div>
<div class="a" style="left:710px;top:914px;width:2px;height:36px;background:#e6e6e6"></div>
<div class="a" style="left:807px;top:914px;width:2px;height:36px;background:#e6e6e6"></div>
<div class="a" style="left:940px;top:914px;width:2px;height:36px;background:#e6e6e6"></div>
<div class="a" style="left:1023px;top:914px;width:2px;height:36px;background:#e6e6e6"></div>
<div class="a" style="left:1175px;top:914px;width:2px;height:36px;background:#e6e6e6"></div>
<div class="a" style="left:1284px;top:914px;width:2px;height:36px;background:#e6e6e6"></div>
<div class="a" style="left:1417px;top:914px;width:2px;height:36px;background:#e6e6e6"></div>
<div class="a" style="left:1525px;top:914px;width:2px;height:36px;background:#e6e6e6"></div>
<div class="t" style="left:15px;top:925px;width:265px;text-align:center;font-size:14px;color:#fff;">总计</div>
<div class="t" style="left:282px;top:925px;width:198px;text-align:center;font-size:14px;color:#fff;">8</div>
<div class="t" style="left:1177px;top:925px;width:107px;text-align:center;font-size:14px;color:#fff;">300.00</div>
<div class="t" style="left:1286px;top:925px;width:131px;text-align:center;font-size:14px;color:#fff;">250.00</div>
<div class="t" style="left:1419px;top:925px;width:106px;text-align:center;font-size:14px;color:#fff;">7.50</div>
<div class="a" style="left:15px;top:912px;width:1889px;height:2px;background:#e6e6e6"></div>
</body></html>
